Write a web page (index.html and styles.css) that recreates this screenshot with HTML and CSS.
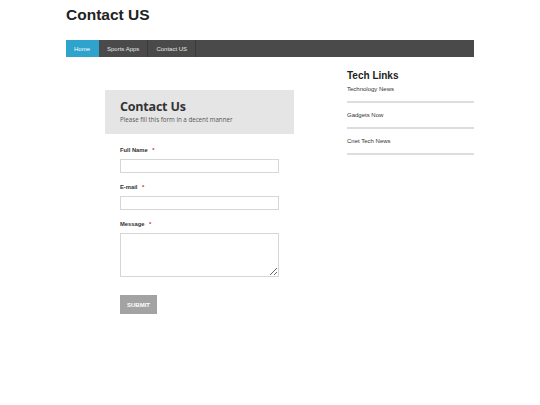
FILE: index.html
```html
<!DOCTYPE html>
<html>
<head>
<meta charset="utf-8">
<link rel="stylesheet" href="styles.css">
</head>
<body>
<div class="page">
  <header class="site-header">
    <h1 class="site-title">Contact US</h1>
  </header>
  <nav class="main-nav">
    <a class="nav-item active">Home</a>
    <a class="nav-item">Sports Apps</a>
    <a class="nav-item">Contact US</a>
  </nav>
  <div class="main-row">
    <main class="content">
      <div class="form-wrap">
        <div class="form-head">
          <h2 class="form-title">Contact Us</h2>
          <p class="form-sub">Please fill this form in a decent manner</p>
        </div>
        <form class="form-body">
          <div class="field">
            <label class="label">Full Name <span class="req">*</span></label>
            <input class="input" type="text">
          </div>
          <div class="field">
            <label class="label">E-mail <span class="req">*</span></label>
            <input class="input" type="text">
          </div>
          <div class="field">
            <label class="label">Message <span class="req">*</span></label>
            <textarea class="textarea"></textarea>
          </div>
          <button class="submit" type="button">SUBMIT</button>
        </form>
      </div>
    </main>
    <aside class="sidebar">
      <h3 class="side-title">Tech Links</h3>
      <ul class="links">
        <li class="link-item">Technology News</li>
        <li class="link-item">Gadgets Now</li>
        <li class="link-item">Cnet Tech News</li>
      </ul>
    </aside>
  </div>
</div>
</body>
</html>
```
FILE: styles.css
```css
* { box-sizing: border-box; }
html, body { margin: 0; padding: 0; background: #fff; }
body { font-family: "Liberation Sans", Arial, sans-serif; color: #333; }
.page { width: 408px; margin-left: 66px; }
.site-header { height: 40px; padding-top: 5px; }
.site-title { margin: 0; font-size: 15.5px; line-height: 20px; font-weight: bold; color: #222; }
.main-nav { display: flex; height: 17px; background: #4a4a4a; }
.nav-item { display: flex; align-items: center; padding: 0 8px; font-size: 6px; color: #e6e6e6; border-right: 1px solid #3a3a3a; text-decoration: none; }
.nav-item.active { background: #2ea3cc; border-right-color: #2ea3cc; color: #fff; }
.main-row { display: flex; }
.content { width: 281px; }
.form-wrap { margin-left: 39px; margin-top: 33px; }
.form-head { background: #e5e5e5; width: 189px; height: 44px; padding: 9px 15px 0; }
.form-title { margin: 0; font-family: "Open Sans", sans-serif; font-size: 12.5px; line-height: 16px; font-weight: bold; color: #333; letter-spacing: -0.2px; }
.form-sub { margin: 1px 0 0; font-family: "Open Sans", sans-serif; font-size: 6.2px; line-height: 8px; color: #555; }
.form-body { padding-left: 15px; padding-top: 13px; }
.field { margin-bottom: 11px; }
.label { display: block; font-size: 5.8px; line-height: 7px; font-weight: bold; color: #333; margin-bottom: 5px; }
.req { color: #c0392b; margin-left: 3px; }
.input { display: block; width: 159px; height: 14px; border: 1px solid #d6d6d6; background: #fff; margin: 0; padding: 0; }
.textarea { display: block; width: 159px; height: 44px; border: 1px solid #d6d6d6; margin: 0; padding: 0; resize: vertical; }
.field:last-of-type { margin-bottom: 18px; }
.submit { display: block; width: 37px; height: 19px; background: #a3a3a3; color: #fff; border: none; font-family: "Liberation Sans", sans-serif; font-size: 6px; font-weight: bold; padding: 0; }
.sidebar { width: 127px; padding-top: 13px; }
.side-title { margin: 0; font-size: 10px; line-height: 12px; font-weight: bold; color: #222; }
.links { list-style: none; margin: 3px 0 0; padding: 0; }
.link-item { font-size: 6px; line-height: 8px; color: #333; padding-bottom: 8px; border-bottom: 2px solid #ddd; margin-bottom: 8px; }
```
